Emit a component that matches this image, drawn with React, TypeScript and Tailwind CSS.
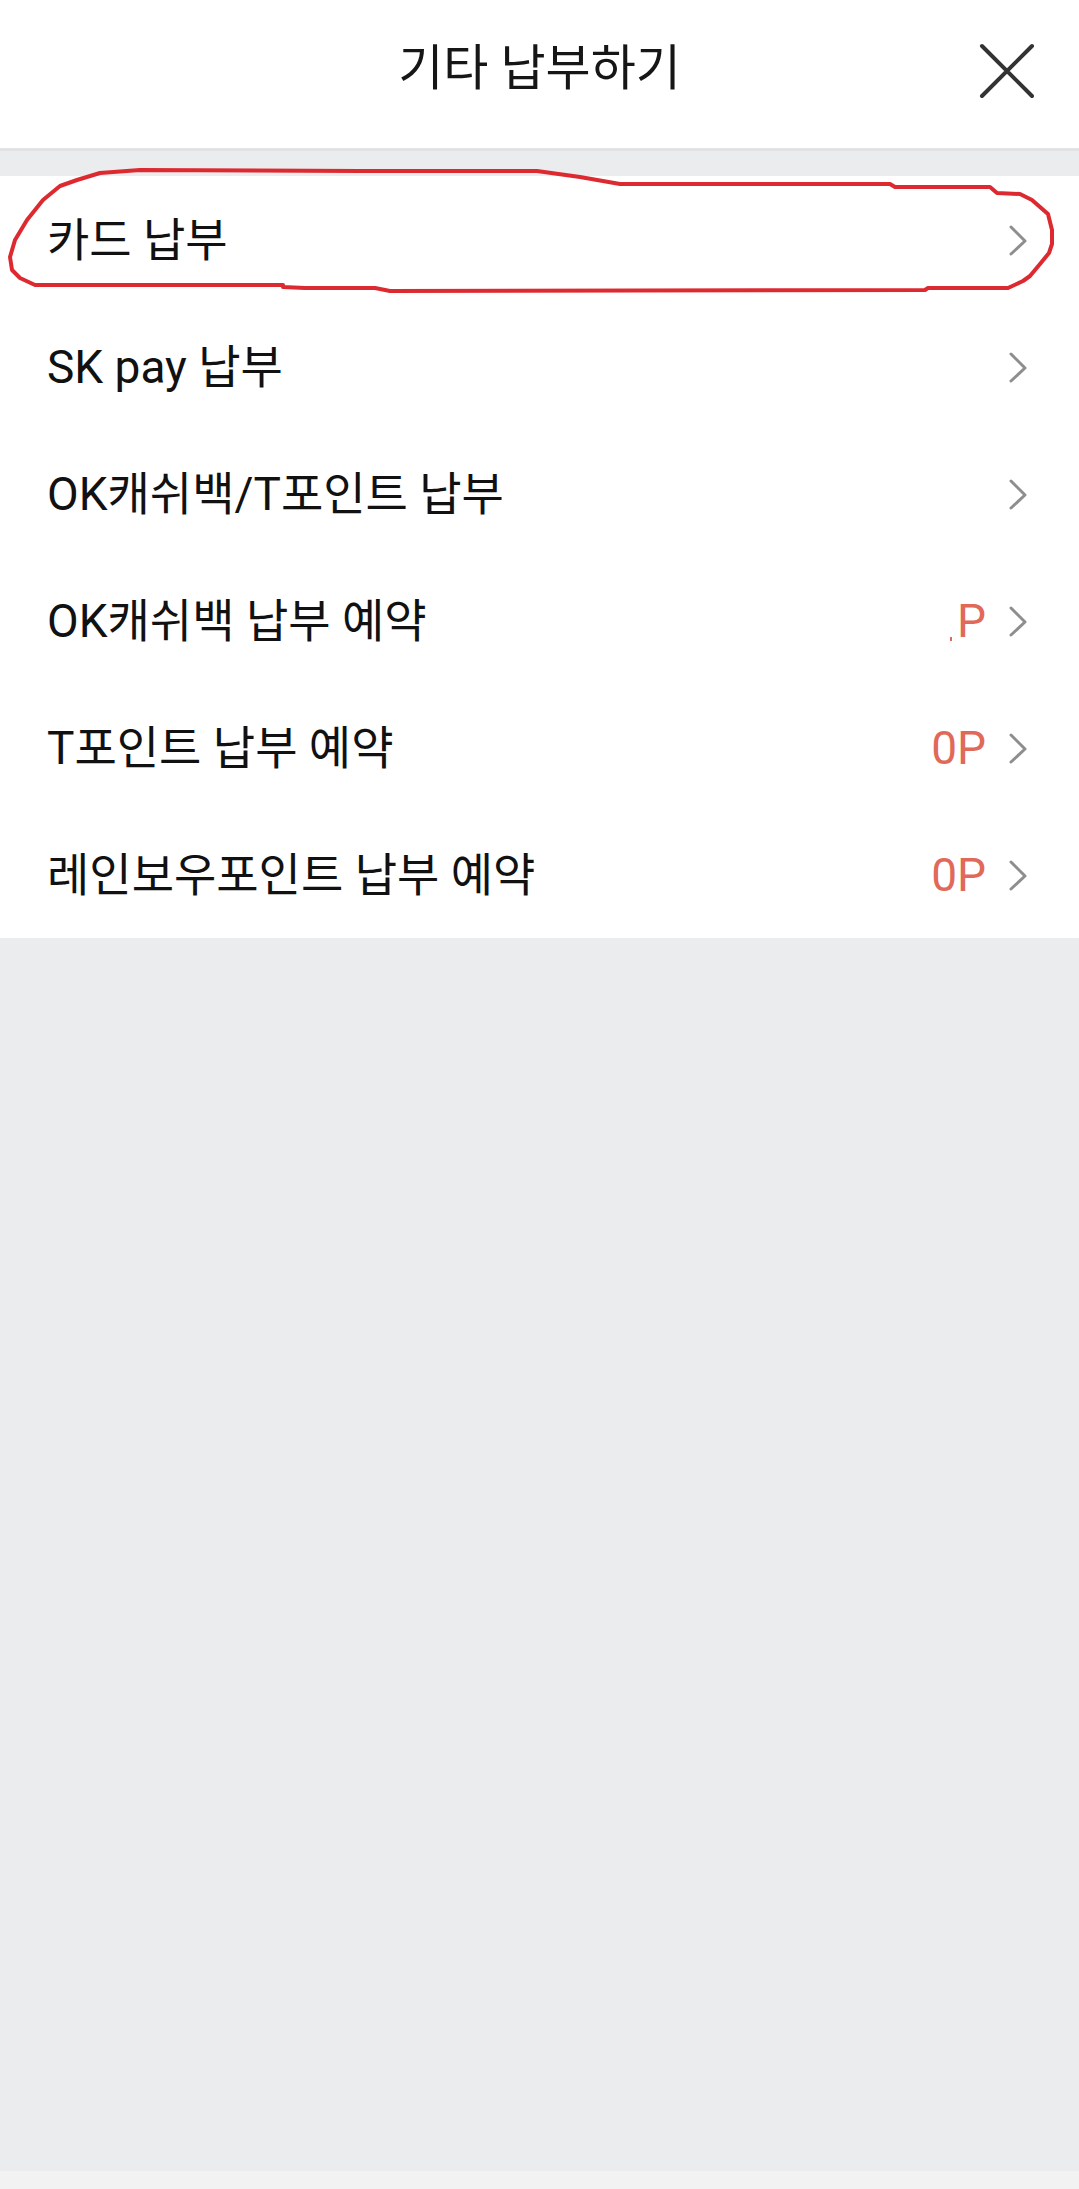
import React from "react";

type Row = { label: string; points?: string; clipped?: boolean };

const rows: Row[] = [
  { label: "카드 납부" },
  { label: "SK pay 납부" },
  { label: "OK캐쉬백/T포인트 납부" },
  { label: "OK캐쉬백 납부 예약", points: "P", clipped: true },
  { label: "T포인트 납부 예약", points: "0P" },
  { label: "레인보우포인트 납부 예약", points: "0P" },
];

function Chevron() {
  return (
    <svg width="22" height="32" viewBox="0 0 22 32" className="shrink-0">
      <path d="M4 3 L18 17 L4 30" fill="none" stroke="#8e8e8e" strokeWidth="3" strokeLinecap="round" strokeLinejoin="round" />
    </svg>
  );
}

export default function App() {
  return (
    <div
      className="relative w-[1079px] min-h-[2189px] bg-[#ebecee] flex flex-col"
      style={{ fontFamily: "Roboto, 'Noto Sans CJK KR', sans-serif" }}
    >
      <header className="relative h-[151px] bg-white border-b-[3px] border-[#e1e2e4] flex items-center justify-center">
        <h1 className="text-[49px] leading-none text-[#161616] font-normal -mt-[12px]">기타 납부하기</h1>
        <button className="absolute right-[44px] top-[43px] w-[56px] h-[56px] flex items-center justify-center">
          <svg width="56" height="56" viewBox="0 0 56 56">
            <path d="M3 3 L53 53 M53 3 L3 53" stroke="#333333" strokeWidth="4" strokeLinecap="round" />
          </svg>
        </button>
      </header>
      <div className="h-[25px]" />
      <ul className="bg-white flex flex-col">
        {rows.map((r) => (
          <li key={r.label} className="h-[127px] flex items-center pl-[47px] pr-[50px]">
            <span className="flex-1 text-[46px] leading-none text-[#111111]">{r.label}</span>
            {r.points && (
              <span className="mr-[21px] flex items-end text-[46px] leading-none text-[#e0695a]">
                {r.clipped && <span className="w-[2px] h-[4px] bg-[#e0695a] mr-[5px] mb-[3px]" />}
                {r.points}
              </span>
            )}
            <Chevron />
          </li>
        ))}
      </ul>
      <div className="flex-1" />
      <div className="h-[18px] bg-[#f2f2f2]" />
      <svg
        className="absolute left-0 top-0 pointer-events-none"
        width="1079"
        height="320"
        viewBox="0 0 1079 320"
      >
        <path
          d="M140 170 L360 171 L537 171 L580 177 L620 184 L890 184 L895 187 L990 187 L997 193 L1020 194 L1032 200 L1040 207 L1048 214 L1052 230 L1052 244 L1049 253 L1040 264 L1030 276 L1023 281 L1008 288 L928 288 L925 290 L390 291 L375 288 L305 288 L283 287 L283 285 L35 285 L20 278 L12 270 L10 257 L15 240 L27 220 L43 200 L60 186 L77 180 L100 173 Z"
          fill="none"
          stroke="#dc2a30"
          strokeWidth="4"
          strokeLinejoin="round"
        />
      </svg>
    </div>
  );
}
